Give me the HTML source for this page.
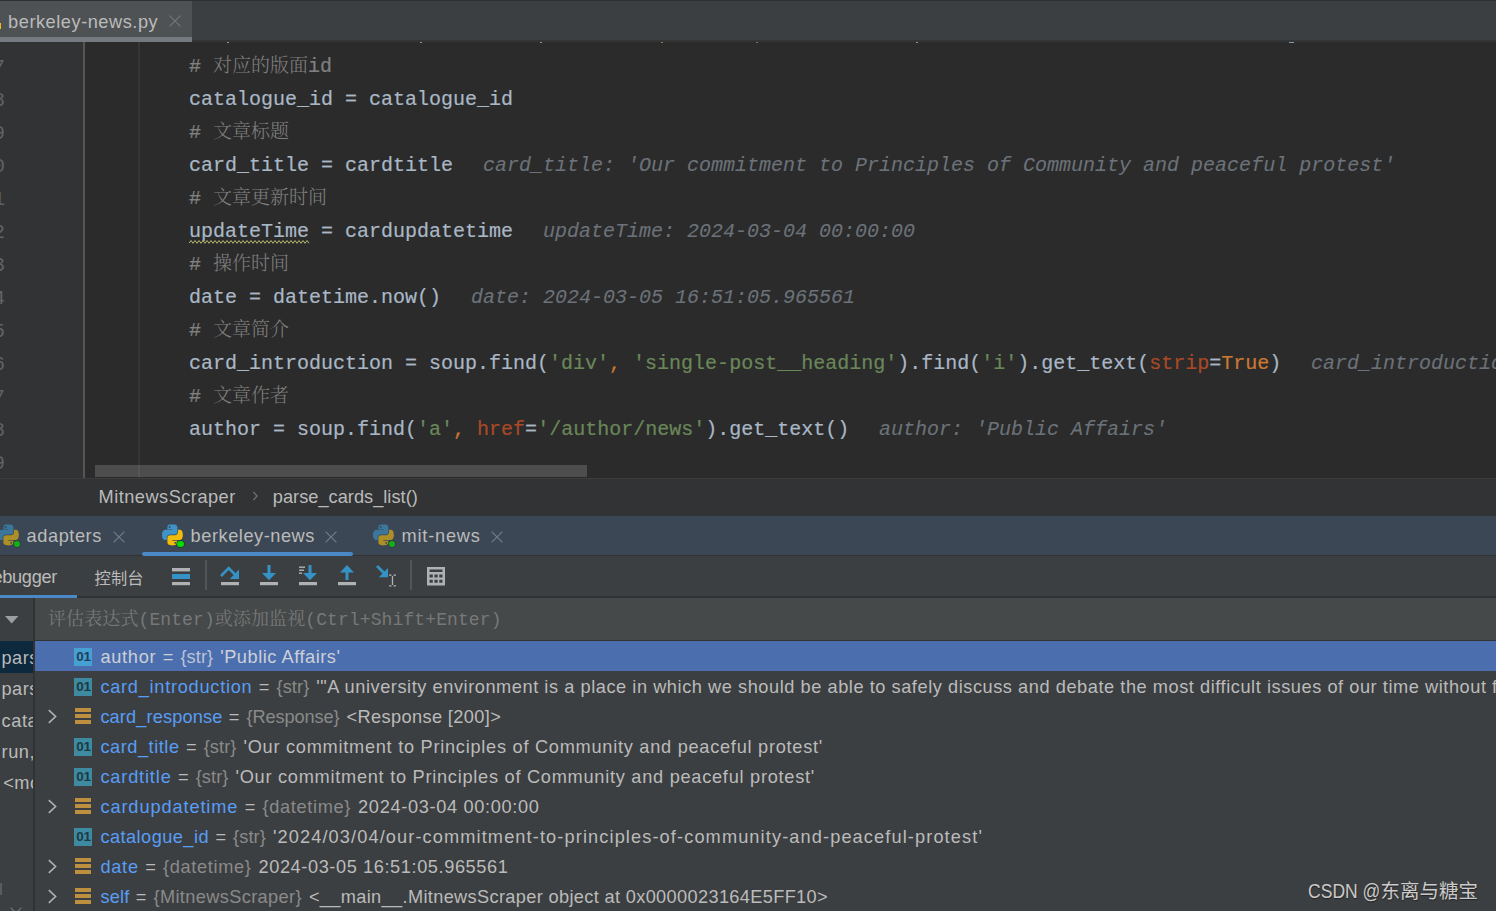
<!DOCTYPE html>
<html lang="zh-CN">
<head>
<meta charset="utf-8">
<title>berkeley-news.py</title>
<style>
html,body{margin:0;padding:0;}
body{width:1496px;height:911px;overflow:hidden;background:#2b2b2b;position:relative;
  font-family:"Liberation Sans","Noto Sans CJK SC",sans-serif;font-size:19.5px;color:#bbbbbb;}
.abs{position:absolute;}
.t{position:absolute;white-space:pre;line-height:1;}
/* top tab bar */
#tabbar{left:0;top:0;width:1496px;height:40px;background:#3c3f41;border-bottom:2px solid #323436;z-index:5;}
#tabtop{left:0;top:0;width:1496px;height:1px;background:#2d2f30;z-index:6;}
#tab1{left:0;top:1px;width:192px;height:36px;background:#4e5254;z-index:6;}
#tab1u{left:0;top:37px;width:192px;height:5px;background:#747a80;z-index:6;}
/* editor */
#editor{left:0;top:41px;width:1496px;height:437px;overflow:hidden;background:#2b2b2b;}
#gutter{left:0;top:0px;width:83px;height:437px;background:#313335;}
#gutline{left:83px;top:0px;width:2px;height:437px;background:#555555;}
#guide{left:138px;top:0px;width:2px;height:437px;background:#363636;}
.ln{position:absolute;margin-top:2.5px;right:1491px;width:60px;text-align:right;font-family:"Liberation Mono",monospace;font-size:20px;color:#606366;line-height:33px;height:33px;}
.cl{position:absolute;-webkit-text-stroke:0.2px;margin-top:2px;left:189px;white-space:pre;font-family:"Liberation Mono","Noto Serif CJK SC",monospace;font-size:20px;line-height:33px;height:33px;color:#a9b7c6;}
.c{color:#808080;}
.s{color:#6a8759;}
.k{color:#cc7832;}
.a{color:#aa4926;}
.iv{color:#6b7279;font-style:italic;-webkit-text-stroke:0.1px;}
.cj{font-family:"Noto Serif CJK SC",serif;font-weight:300;-webkit-text-stroke:0;font-size:19px;letter-spacing:0;position:relative;top:-0.5px;line-height:0;}
#hscroll{left:95px;top:465px;width:492px;height:12px;background:rgba(255,255,255,0.16);}
/* breadcrumbs */
#crumbs{left:0;top:478px;width:1496px;height:37px;background:#313335;border-top:1px solid #3a3c3e;}
/* debug tabs */
#dtabs{left:0;top:516px;width:1496px;height:39px;background:#3b4754;}
#dtabu{left:142px;top:552px;width:211px;height:4px;background:#4a88c7;border-radius:2px;z-index:2;}
#dline{left:0;top:555px;width:1496px;height:1px;background:#323232;}
/* toolbar */
#tbar{left:0;top:556px;width:1496px;height:40px;background:#3c3f41;}
#tbaru{left:0;top:595px;width:77px;height:3px;background:#4a88c7;z-index:2;}
#tline{left:0;top:596px;width:1496px;height:2px;background:#2f3133;}
.sep{position:absolute;top:562px;width:1px;height:28px;background:#555555;}
/* eval row */
#evl{left:0;top:598px;width:33px;height:313px;background:#3c3f41;}
#evsep{left:33px;top:598px;width:2px;height:313px;background:#323232;}
#eval{left:35px;top:598px;width:1461px;height:42px;background:#45494a;}
#evline{left:35px;top:640px;width:1461px;height:1px;background:#323232;}
#vars{left:35px;top:641px;width:1461px;height:270px;background:#3c3f41;}
#sel{left:35px;top:641px;width:1461px;height:30px;background:#4b6eaf;}
#fsel{left:0;top:641px;width:33px;height:31.5px;background:#0d293e;}
.row{position:absolute;left:100px;white-space:pre;line-height:30px;height:30px;font-size:19.6px;color:#bbbbbb;}
.n{color:#589df6;}
.ty{color:#8a8a8a;}
.fr{position:absolute;left:2px;white-space:pre;line-height:30px;height:30px;font-size:18.2px;letter-spacing:0.55px;color:#bbbbbb;width:32px;overflow:hidden;}

.dot{width:6.4px;height:6.4px;border-radius:50%;background:#00e000;box-shadow:0 0 0 0.7px #24382c;}
.ic{left:74px;width:18px;height:18px;background:#3e8aa0;color:#1d3a47;font-size:12px;font-weight:bold;line-height:18.5px;text-align:center;letter-spacing:-0.2px;}
.ic.sel{background:#46a0d2;color:#1f3f5c;}
.li{left:75px;width:16px;height:16px;background:linear-gradient(#bd9040 0 4px,transparent 4px 6px,#bd9040 6px 10px,transparent 10px 12px,#bd9040 12px 16px);}
.chev{left:47px;width:11px;height:15px;}
.sg{position:absolute;white-space:pre;}
.mk{top:1px;width:2px;height:1px;background:#8a959f;}
.ic span{display:inline-block;transform:scaleX(1.13);}

</style>
</head>
<body>
<svg width="0" height="0" style="position:absolute">
<defs>
<symbol id="py" viewBox="0 0 112 113">
<path fill="#3e93c8" d="M54.92,0 C50.34,0.02 45.96,0.41 42.11,1.09 30.76,3.1 28.7,7.29 28.7,15.03 L28.7,25.25 55.51,25.25 55.51,28.66 28.7,28.66 18.64,28.66 C10.85,28.66 4.02,33.34 1.89,42.25 -0.57,52.46 -0.68,58.84 1.89,69.5 3.79,77.44 8.35,83.09 16.14,83.09 L25.36,83.09 25.36,70.84 C25.36,61.99 33.01,54.19 42.11,54.19 L68.89,54.19 C76.34,54.19 82.29,48.05 82.29,40.56 L82.29,15.03 C82.29,7.77 76.16,2.31 68.89,1.09 64.28,0.33 59.5,-0.02 54.92,0 Z M40.42,8.22 C43.19,8.22 45.45,10.52 45.45,13.34 45.45,16.16 43.19,18.44 40.42,18.44 37.64,18.44 35.39,16.16 35.39,13.34 35.39,10.52 37.64,8.22 40.42,8.22 Z"/>
<path fill="#f2bc0c" d="M85.64,28.66 L85.64,40.56 C85.64,49.79 77.81,57.56 68.89,57.56 L42.11,57.56 C34.77,57.56 28.7,63.84 28.7,71.19 L28.7,96.72 C28.7,103.99 35.02,108.26 42.11,110.34 50.59,112.84 58.73,113.29 68.89,110.34 75.64,108.39 82.29,104.46 82.29,96.72 L82.29,86.5 55.51,86.5 55.51,83.09 82.29,83.09 95.7,83.09 C103.49,83.09 106.4,77.66 109.11,69.5 111.91,61.1 111.79,53.03 109.11,42.25 107.18,34.49 103.5,28.66 95.7,28.66 Z M70.58,93.31 C73.35,93.31 75.61,95.59 75.61,98.41 75.61,101.23 73.35,103.53 70.58,103.53 67.81,103.53 65.54,101.23 65.54,98.41 65.54,95.59 67.81,93.31 70.58,93.31 Z"/>
</symbol>
<symbol id="chev" viewBox="0 0 11 15"><path d="M1.8 1.2 L8.6 7.5 L1.8 13.8" fill="none" stroke="#afb1b3" stroke-width="1.6"/></symbol>
</defs>
</svg>
<div id="tabbar" class="abs"></div>
<div id="tabtop" class="abs"></div>
<div id="tab1" class="abs"></div>
<div id="tab1u" class="abs"></div>
<div class="sg" style="left:8.1px;top:6.59px;font-size:18.2px;line-height:30px;height:30px;letter-spacing:0.536px;color:#bbbbbb;z-index:7;">berkeley-news.py</div>
<div class="abs" style="left:0;top:22.5px;width:1.3px;height:6px;background:#f2bc0c;z-index:7;"></div>
<svg class="abs" style="left:168px;top:14px;z-index:7" width="14" height="14" viewBox="0 0 14 14"><path d="M1.6 1.6 L12.4 12.4 M12.4 1.6 L1.6 12.4" stroke="#70767a" stroke-width="1.2" fill="none"/></svg>

<div id="editor" class="abs">
<div id="gutter" class="abs"></div>
<div id="gutline" class="abs"></div>
<div id="guide" class="abs"></div>

<div class="ln" style="top:7px;">87</div>
<div class="ln" style="top:40px;">88</div>
<div class="ln" style="top:73px;">89</div>
<div class="ln" style="top:106px;">90</div>
<div class="ln" style="top:139px;">91</div>
<div class="ln" style="top:172px;">92</div>
<div class="ln" style="top:205px;">93</div>
<div class="ln" style="top:238px;">94</div>
<div class="ln" style="top:271px;">95</div>
<div class="ln" style="top:304px;">96</div>
<div class="ln" style="top:337px;">97</div>
<div class="ln" style="top:370px;">98</div>
<div class="ln" style="top:403px;">99</div>
<!-- code lines -->
<div class="abs mk" style="left:227px;"></div><div class="abs mk" style="left:420px;"></div><div class="abs mk" style="left:540px;"></div><div class="abs mk" style="left:661px;background:#b5702f;"></div><div class="abs mk" style="left:756px;background:#66804f;"></div><div class="abs mk" style="left:916px;"></div><div class="abs mk" style="left:1289px;width:5px;"></div>
<div class="cl" style="top:7px;"><span class="c"># <span class="cj">对应的版面</span>id</span></div>
<div class="cl" style="top:40px;">catalogue_id = catalogue_id</div>
<div class="cl" style="top:73px;"><span class="c"># <span class="cj">文章标题</span></span></div>
<div class="cl" style="top:106px;">card_title = cardtitle</div>
<div class="cl iv" style="top:106px;left:483px;">card_title: 'Our commitment to Principles of Community and peaceful protest'</div>
<div class="cl" style="top:139px;"><span class="c"># <span class="cj">文章更新时间</span></span></div>
<div class="cl" style="top:172px;"><span class="typo">updateTime</span> = cardupdatetime</div>
<svg class="abs" style="left:189px;top:199px" width="121" height="4" viewBox="0 0 121 4"><polyline points="0,3.3 2,0.5 4,3.3 6,0.5 8,3.3 10,0.5 12,3.3 14,0.5 16,3.3 18,0.5 20,3.3 22,0.5 24,3.3 26,0.5 28,3.3 30,0.5 32,3.3 34,0.5 36,3.3 38,0.5 40,3.3 42,0.5 44,3.3 46,0.5 48,3.3 50,0.5 52,3.3 54,0.5 56,3.3 58,0.5 60,3.3 62,0.5 64,3.3 66,0.5 68,3.3 70,0.5 72,3.3 74,0.5 76,3.3 78,0.5 80,3.3 82,0.5 84,3.3 86,0.5 88,3.3 90,0.5 92,3.3 94,0.5 96,3.3 98,0.5 100,3.3 102,0.5 104,3.3 106,0.5 108,3.3 110,0.5 112,3.3 114,0.5 116,3.3 118,0.5 120,3.3" fill="none" stroke="#b8b870" stroke-width="1"/></svg>
<div class="cl iv" style="top:172px;left:543px;">updateTime: 2024-03-04 00:00:00</div>
<div class="cl" style="top:205px;"><span class="c"># <span class="cj">操作时间</span></span></div>
<div class="cl" style="top:238px;">date = datetime.now()</div>
<div class="cl iv" style="top:238px;left:471px;">date: 2024-03-05 16:51:05.965561</div>
<div class="cl" style="top:271px;"><span class="c"># <span class="cj">文章简介</span></span></div>
<div class="cl" style="top:304px;">card_introduction = soup.find(<span class="s">'div'</span><span class="k">,</span> <span class="s">'single-post__heading'</span>).find(<span class="s">'i'</span>).get_text(<span class="a">strip</span>=<span class="k">True</span>)</div>
<div class="cl iv" style="top:304px;left:1311px;">card_introduction: '"A university environment</div>
<div class="cl" style="top:337px;"><span class="c"># <span class="cj">文章作者</span></span></div>
<div class="cl" style="top:370px;">author = soup.find(<span class="s">'a'</span><span class="k">,</span> <span class="a">href</span>=<span class="s">'/author/news'</span>).get_text()</div>
<div class="cl iv" style="top:370px;left:879px;">author: 'Public Affairs'</div>


</div>
<div id="hscroll" class="abs"></div>
<div id="crumbs" class="abs"></div>
<div id="dtabs" class="abs"></div>
<div id="dtabu" class="abs"></div>
<div id="dline" class="abs"></div>
<div id="tbar" class="abs"></div>
<div id="tbaru" class="abs"></div>
<div id="tline" class="abs"></div>
<div id="evl" class="abs"></div>
<div id="evsep" class="abs"></div>
<div id="eval" class="abs"></div>
<div id="evline" class="abs"></div>
<div id="vars" class="abs"></div>
<div id="sel" class="abs"></div>
<div id="fsel" class="abs"></div>

<!-- breadcrumbs -->
<div class="sg" style="left:98.6px;top:481.99px;font-size:18.2px;line-height:30px;height:30px;letter-spacing:0.480px;color:#bbbbbb;">MitnewsScraper</div>
<svg class="abs" style="left:250px;top:489px" width="10" height="14" viewBox="0 0 10 14"><path d="M3.5 3 L7 7 L3.5 11" fill="none" stroke="#6e7173" stroke-width="1.3"/></svg>
<div class="sg" style="left:272.8px;top:481.99px;font-size:18.2px;line-height:30px;height:30px;letter-spacing:0.026px;color:#bbbbbb;">parse_cards_list()</div>

<!-- debug tabs -->
<svg class="abs" style="left:-1.6px;top:524px;opacity:.62" width="21" height="22"><use href="#py"/></svg>
<div class="abs dot" style="left:13.8px;top:540.8px;opacity:.7"></div>
<div class="sg" style="left:26.6px;top:521.49px;font-size:18.2px;line-height:30px;height:30px;letter-spacing:0.565px;">adapters</div>
<svg class="abs x" style="left:112px;top:530px" width="14" height="14" viewBox="0 0 14 14"><path d="M1.6 1.6 L12.4 12.4 M12.4 1.6 L1.6 12.4" stroke="#6f7b88" stroke-width="1.3" fill="none"/></svg>

<svg class="abs" style="left:161.6px;top:524px" width="21" height="22"><use href="#py"/></svg>
<div class="abs dot" style="left:177.2px;top:540.8px;"></div>
<div class="sg" style="left:190.6px;top:521.49px;font-size:18.2px;line-height:30px;height:30px;letter-spacing:0.542px;">berkeley-news</div>
<svg class="abs x" style="left:324px;top:530px" width="14" height="14" viewBox="0 0 14 14"><path d="M1.6 1.6 L12.4 12.4 M12.4 1.6 L1.6 12.4" stroke="#6f7b88" stroke-width="1.3" fill="none"/></svg>

<svg class="abs" style="left:372.6px;top:524px;opacity:.62" width="21" height="22"><use href="#py"/></svg>
<div class="abs dot" style="left:388.8px;top:540.8px;opacity:.7"></div>
<div class="sg" style="left:401.6px;top:521.49px;font-size:18.2px;line-height:30px;height:30px;letter-spacing:0.780px;">mit-news</div>
<svg class="abs x" style="left:490px;top:530px" width="14" height="14" viewBox="0 0 14 14"><path d="M1.6 1.6 L12.4 12.4 M12.4 1.6 L1.6 12.4" stroke="#6f7b88" stroke-width="1.3" fill="none"/></svg>

<!-- toolbar -->
<div class="sg" style="left:-20.4px;top:561.99px;font-size:18.2px;line-height:30px;height:30px;letter-spacing:-0.310px;">Debugger</div>
<div class="t" id="tb2" style="left:94.6px;top:568.9px;font-size:16.3px;font-family:'Noto Sans CJK SC',sans-serif;">控制台</div>
<svg class="abs" style="left:160px;top:556px" width="300" height="40" viewBox="160 556 300 40">
  <!-- threads -->
  <rect x="172" y="568" width="18" height="3.4" fill="#afb1b3"/>
  <rect x="172" y="574" width="18" height="5" fill="#3592c4"/>
  <rect x="172" y="582" width="18" height="3.2" fill="#afb1b3"/>
  <rect x="205" y="560" width="2" height="30" fill="#555555"/>
  <!-- step over -->
  <path d="M221 576 L228.7 568.2 L235 574.5" fill="none" stroke="#3592c4" stroke-width="2.6"/>
  <path d="M239 569.5 L239 579 L229.8 579 Z" fill="#3592c4"/>
  <rect x="221" y="582" width="18" height="3.2" fill="#afb1b3"/>
  <!-- step into -->
  <rect x="267.5" y="565" width="3" height="9" fill="#3592c4"/>
  <path d="M262 573 L276 573 L269 580.2 Z" fill="#3592c4"/>
  <rect x="260" y="582" width="18" height="3.2" fill="#afb1b3"/>
  <!-- step into my code -->
  <rect x="299" y="566.5" width="6" height="1.4" fill="#afb1b3"/>
  <rect x="299" y="569.5" width="5" height="1.4" fill="#afb1b3"/>
  <rect x="299" y="572.5" width="3" height="1.4" fill="#afb1b3"/>
  <rect x="308.5" y="565" width="3" height="9" fill="#3592c4"/>
  <path d="M303 573 L317 573 L310 580.2 Z" fill="#3592c4"/>
  <rect x="299" y="582" width="18" height="3.2" fill="#afb1b3"/>
  <!-- step out -->
  <rect x="345.5" y="571" width="3" height="9" fill="#3592c4"/>
  <path d="M340 572.5 L354 572.5 L347 565 Z" fill="#3592c4"/>
  <rect x="338" y="582" width="18" height="3.2" fill="#afb1b3"/>
  <!-- run to cursor -->
  <path d="M377 566 L386 575" fill="none" stroke="#3592c4" stroke-width="2.8"/>
  <path d="M388 568 L388 577.2 L378.8 577.2 Z" fill="#3592c4"/>
  <path d="M389 575.2 L391.5 575.2 M393.5 575.2 L396 575.2 M392.5 576 L392.5 585 M389 585.8 L391.5 585.8 M393.5 585.8 L396 585.8" fill="none" stroke="#afb1b3" stroke-width="1.3"/>
  <rect x="410" y="560" width="2" height="30" fill="#555555"/>
  <!-- calculator -->
  <path fill="#afb1b3" fill-rule="evenodd" d="M427 567 H445 V585.5 H427 Z M429.5 569.5 V572 H442.5 V569.5 Z M429.5 574.5 V577.5 H432.8 V574.5 Z M434.4 574.5 V577.5 H437.7 V574.5 Z M439.3 574.5 V577.5 H442.5 V574.5 Z M429.5 579.7 V582.7 H432.8 V579.7 Z M434.4 579.7 V582.7 H437.7 V579.7 Z M439.3 579.7 V582.7 H442.5 V579.7 Z"/>
</svg>

<!-- eval -->
<svg class="abs" style="left:5px;top:616px" width="14" height="8" viewBox="0 0 14 8"><path d="M0 0 H13.4 L6.7 7.5 Z" fill="#9c9ea0"/></svg>
<div class="t" id="evtxt" style="left:48px;top:610.8px;letter-spacing:0.1px;font-family:'Liberation Mono','Noto Serif CJK SC',monospace;font-size:18px;color:#787878;">评估表达式(Enter)或添加监视(Ctrl+Shift+Enter)</div>

<!-- frames -->
<div class="fr" style="top:642.59px;left:1.4px;width:31.6px;">parse_cards_list, berkeley-news.py:88</div>
<div class="fr" style="top:674.09px;left:1.4px;width:31.6px;">parse_catalogues, berkeley-news.py:52</div>
<div class="fr" style="top:705.59px;left:1.6px;width:31.4px;">catalogue_all_pages, berkeley-news.py:40</div>
<div class="fr" style="top:736.69px;left:1.6px;width:31.4px;">run, berkeley-news.py:150</div>
<div class="fr" style="top:767.79px;left:3.2px;width:29.8px;">&lt;module&gt;, berkeley-news.py:161</div>
<div class="abs" style="left:0;top:883px;width:2px;height:12px;background:#595b5d;"></div>
<svg class="abs" style="left:9px;top:906px" width="14" height="8" viewBox="0 0 14 8"><path d="M1.6 1.6 L7 7 L12.4 1.6" stroke="#6e7275" stroke-width="1.3" fill="none"/></svg>

<!-- variables -->
<div class="abs ic sel" style="top:648px;"><span>01</span></div>
<div class="sg" style="left:100.4px;top:641.69px;font-size:18.2px;line-height:30px;height:30px;letter-spacing:0.722px;color:#cdd0d6;">author</div>
<div class="sg" style="left:162.7px;top:641.69px;font-size:18.2px;line-height:30px;height:30px;letter-spacing:0.779px;color:#cdd0d6;">=</div>
<div class="sg" style="left:180.4px;top:641.69px;font-size:18.2px;line-height:30px;height:30px;letter-spacing:0.090px;color:#bcc3d3;">{str}</div>
<div class="sg" style="left:220.2px;top:641.69px;font-size:18.2px;line-height:30px;height:30px;letter-spacing:0.534px;color:#cdd0d6;">'Public Affairs'</div>
<div class="abs ic" style="top:678px;"><span>01</span></div>
<div class="sg" style="left:100.4px;top:671.69px;font-size:18.2px;line-height:30px;height:30px;letter-spacing:0.734px;color:#589df6;">card_introduction</div>
<div class="sg" style="left:258.8px;top:671.69px;font-size:18.2px;line-height:30px;height:30px;letter-spacing:0.779px;color:#bbbbbb;">=</div>
<div class="sg" style="left:276.5px;top:671.69px;font-size:18.2px;line-height:30px;height:30px;letter-spacing:0.090px;color:#8a8a8a;">{str}</div>
<div class="sg" style="left:316.3px;top:671.69px;font-size:18.2px;line-height:30px;height:30px;letter-spacing:0.553px;color:#bbbbbb;">'"A university environment is a place in which we should be able to safely discuss and debate the most difficult issues of our time without fear</div>
<svg class="abs chev" style="top:709px;"><use href="#chev"/></svg>
<div class="abs li" style="top:708px;"></div>
<div class="sg" style="left:100.4px;top:701.69px;font-size:18.2px;line-height:30px;height:30px;letter-spacing:0.130px;color:#589df6;">card_response</div>
<div class="sg" style="left:228.8px;top:701.69px;font-size:18.2px;line-height:30px;height:30px;letter-spacing:0.779px;color:#bbbbbb;">=</div>
<div class="sg" style="left:246.5px;top:701.69px;font-size:18.2px;line-height:30px;height:30px;letter-spacing:-0.105px;color:#8a8a8a;">{Response}</div>
<div class="sg" style="left:346.5px;top:701.69px;font-size:18.2px;line-height:30px;height:30px;letter-spacing:0.379px;color:#bbbbbb;">&lt;Response [200]&gt;</div>
<div class="abs ic" style="top:738px;"><span>01</span></div>
<div class="sg" style="left:100.4px;top:731.69px;font-size:18.2px;line-height:30px;height:30px;letter-spacing:0.540px;color:#589df6;">card_title</div>
<div class="sg" style="left:186.0px;top:731.69px;font-size:18.2px;line-height:30px;height:30px;letter-spacing:0.779px;color:#bbbbbb;">=</div>
<div class="sg" style="left:203.7px;top:731.69px;font-size:18.2px;line-height:30px;height:30px;letter-spacing:0.090px;color:#8a8a8a;">{str}</div>
<div class="sg" style="left:243.5px;top:731.69px;font-size:18.2px;line-height:30px;height:30px;letter-spacing:0.733px;color:#bbbbbb;">'Our commitment to Principles of Community and peaceful protest'</div>
<div class="abs ic" style="top:768px;"><span>01</span></div>
<div class="sg" style="left:100.4px;top:761.69px;font-size:18.2px;line-height:30px;height:30px;letter-spacing:0.835px;color:#589df6;">cardtitle</div>
<div class="sg" style="left:178.0px;top:761.69px;font-size:18.2px;line-height:30px;height:30px;letter-spacing:0.779px;color:#bbbbbb;">=</div>
<div class="sg" style="left:195.7px;top:761.69px;font-size:18.2px;line-height:30px;height:30px;letter-spacing:0.090px;color:#8a8a8a;">{str}</div>
<div class="sg" style="left:235.5px;top:761.69px;font-size:18.2px;line-height:30px;height:30px;letter-spacing:0.733px;color:#bbbbbb;">'Our commitment to Principles of Community and peaceful protest'</div>
<svg class="abs chev" style="top:799px;"><use href="#chev"/></svg>
<div class="abs li" style="top:798px;"></div>
<div class="sg" style="left:100.4px;top:791.69px;font-size:18.2px;line-height:30px;height:30px;letter-spacing:0.902px;color:#589df6;">cardupdatetime</div>
<div class="sg" style="left:244.8px;top:791.69px;font-size:18.2px;line-height:30px;height:30px;letter-spacing:0.779px;color:#bbbbbb;">=</div>
<div class="sg" style="left:262.5px;top:791.69px;font-size:18.2px;line-height:30px;height:30px;letter-spacing:0.669px;color:#8a8a8a;">{datetime}</div>
<div class="sg" style="left:358.1px;top:791.69px;font-size:18.2px;line-height:30px;height:30px;letter-spacing:0.664px;color:#bbbbbb;">2024-03-04 00:00:00</div>
<div class="abs ic" style="top:828px;"><span>01</span></div>
<div class="sg" style="left:100.4px;top:821.69px;font-size:18.2px;line-height:30px;height:30px;letter-spacing:0.454px;color:#589df6;">catalogue_id</div>
<div class="sg" style="left:215.4px;top:821.69px;font-size:18.2px;line-height:30px;height:30px;letter-spacing:0.779px;color:#bbbbbb;">=</div>
<div class="sg" style="left:233.1px;top:821.69px;font-size:18.2px;line-height:30px;height:30px;letter-spacing:0.090px;color:#8a8a8a;">{str}</div>
<div class="sg" style="left:272.9px;top:821.69px;font-size:18.2px;line-height:30px;height:30px;letter-spacing:1.113px;color:#bbbbbb;">'2024/03/04/our-commitment-to-principles-of-community-and-peaceful-protest'</div>
<svg class="abs chev" style="top:859px;"><use href="#chev"/></svg>
<div class="abs li" style="top:858px;"></div>
<div class="sg" style="left:100.4px;top:851.69px;font-size:18.2px;line-height:30px;height:30px;letter-spacing:0.750px;color:#589df6;">date</div>
<div class="sg" style="left:145.2px;top:851.69px;font-size:18.2px;line-height:30px;height:30px;letter-spacing:0.779px;color:#bbbbbb;">=</div>
<div class="sg" style="left:162.9px;top:851.69px;font-size:18.2px;line-height:30px;height:30px;letter-spacing:0.669px;color:#8a8a8a;">{datetime}</div>
<div class="sg" style="left:258.5px;top:851.69px;font-size:18.2px;line-height:30px;height:30px;letter-spacing:0.587px;color:#bbbbbb;">2024-03-05 16:51:05.965561</div>
<svg class="abs chev" style="top:889px;"><use href="#chev"/></svg>
<div class="abs li" style="top:888px;"></div>
<div class="sg" style="left:100.4px;top:881.69px;font-size:18.2px;line-height:30px;height:30px;letter-spacing:0.174px;color:#589df6;">self</div>
<div class="sg" style="left:135.8px;top:881.69px;font-size:18.2px;line-height:30px;height:30px;letter-spacing:0.779px;color:#bbbbbb;">=</div>
<div class="sg" style="left:153.5px;top:881.69px;font-size:18.2px;line-height:30px;height:30px;letter-spacing:0.367px;color:#8a8a8a;">{MitnewsScraper}</div>
<div class="sg" style="left:308.9px;top:881.69px;font-size:18.2px;line-height:30px;height:30px;letter-spacing:0.345px;color:#bbbbbb;">&lt;__main__.MitnewsScraper object at 0x0000023164E5FF10&gt;</div>

<!-- watermark -->
<div class="t" id="wm" style="left:1308.2px;top:881.5px;font-size:19.5px;color:#cacaca;text-shadow:0.6px 0.8px 1px #222;"><span style="display:inline-block;transform:scaleX(.9);transform-origin:0 50%;">CSDN @</span></div>
<div class="t" id="wm2" style="left:1380.4px;top:880px;font-size:19.5px;color:#cacaca;font-family:'Noto Sans CJK SC',sans-serif;text-shadow:0.6px 0.8px 1px #222;">东离与糖宝</div>

</body>
</html>
